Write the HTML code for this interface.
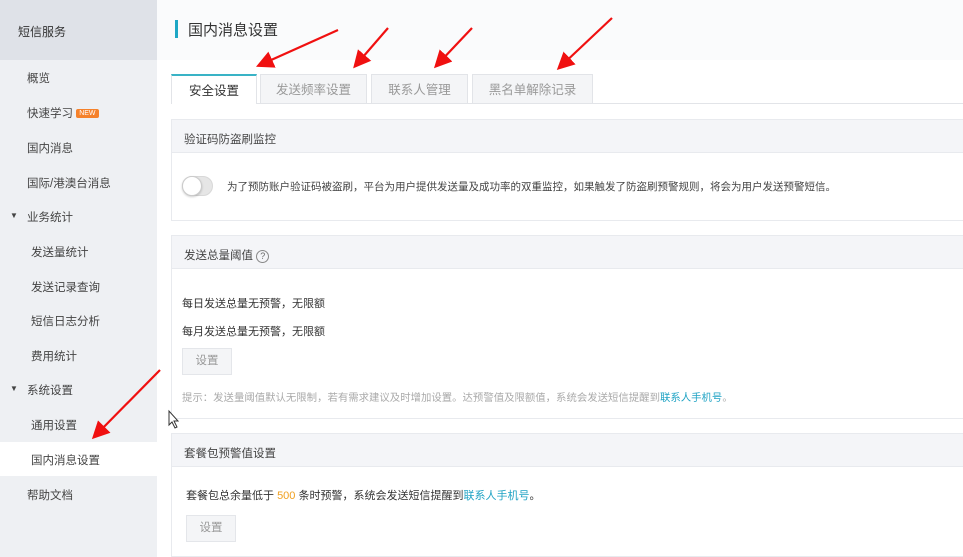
<!DOCTYPE html>
<html><head><meta charset="utf-8"><style>
*{margin:0;padding:0;box-sizing:border-box}
html,body{width:963px;height:557px;overflow:hidden}
body{background:#fff;font-family:"Liberation Sans","Noto Sans CJK SC",sans-serif;font-size:12px;color:#333;position:relative}
.side{position:absolute;left:0;top:0;width:157px;height:557px;background:#eef0f3}
.sh{height:60px;background:#dfe2e8;padding:23px 0 0 18px;font-size:12px;color:#333}
.si{position:absolute;left:27px;font-size:11.5px;color:#444}
.sub{left:31px}
.tri{position:absolute;left:10px;font-size:8px;color:#444}
.sel{position:absolute;left:0;top:442px;width:157px;height:34px;background:#fff}
.hdr{position:absolute;left:157px;top:0;width:806px;height:60px;background:#fafbfc}
.t{position:absolute;font-size:15px;color:#333}
.tab{position:absolute;top:74px;height:30px;border:1px solid #e2e4e8;background:#f4f5f7;color:#999;font-size:12.5px;text-align:center;line-height:30px}
.tab.a{background:#fff;color:#333;border-top:2px solid #39b3c6;border-bottom:none;height:30px}
.sec{position:absolute;left:171px;width:792px;border:1px solid #e8eaee;border-right:none;background:#fff;overflow:hidden}
.sec .h{height:33px;background:#f4f5f8;border-bottom:1px solid #e8eaee;padding:11px 0 0 12px;font-size:11.5px;color:#444}
.x{position:absolute;font-size:11px;color:#333;white-space:nowrap}
.btn{position:absolute;width:50px;height:27px;background:#f4f5f7;border:1px solid #e4e6ea;color:#999;text-align:center;line-height:25px;font-size:11.5px}
</style></head><body>
<div class="side">
<div class="sh">短信服务</div>
<div class="sel"></div>
<div class="si" style="top:70px">概览</div>
<div class="si" style="top:105px">快速学习 <span style="background:#f5812a;color:#fff;font-size:7px;padding:1px 3px;border-radius:2px;vertical-align:2px">NEW</span></div>
<div class="si" style="top:140px">国内消息</div>
<div class="si" style="top:175px">国际/港澳台消息</div>
<div class="tri" style="top:211px">▼</div><div class="si" style="top:209px">业务统计</div>
<div class="si sub" style="top:244px">发送量统计</div>
<div class="si sub" style="top:279px">发送记录查询</div>
<div class="si sub" style="top:313px">短信日志分析</div>
<div class="si sub" style="top:348px">费用统计</div>
<div class="tri" style="top:384px">▼</div><div class="si" style="top:382px">系统设置</div>
<div class="si sub" style="top:417px">通用设置</div>
<div class="si sub" style="top:452px">国内消息设置</div>
<div class="si" style="top:487px">帮助文档</div>
</div>
<div class="hdr"></div>
<div style="position:absolute;left:175px;top:20px;width:3px;height:18px;background:#1ea7c5"></div>
<div class="t" style="left:188px;top:19px">国内消息设置</div>
<div style="position:absolute;left:171px;top:103px;width:792px;height:1px;background:#e2e4e8"></div>
<div class="tab a" style="left:171px;width:86px">安全设置</div>
<div class="tab" style="left:260px;width:107px">发送频率设置</div>
<div class="tab" style="left:371px;width:97px">联系人管理</div>
<div class="tab" style="left:472px;width:121px">黑名单解除记录</div>

<div class="sec" style="top:119px;height:102px"><div class="h">验证码防盗刷监控</div></div>
<div style="position:absolute;left:182px;top:176px;width:31px;height:20px;border-radius:10px;background:#e6e6e6;border:1px solid #d8d8d8"></div>
<div style="position:absolute;left:182px;top:176px;width:20px;height:20px;border-radius:10px;background:#fff;border:1px solid #ccc;box-shadow:0 1px 2px rgba(0,0,0,.2)"></div>
<div class="x" style="left:227px;top:179px;color:#444;font-size:10.5px">为了预防账户验证码被盗刷，平台为用户提供发送量及成功率的双重监控，如果触发了防盗刷预警规则，将会为用户发送预警短信。</div>

<div class="sec" style="top:235px;height:184px"><div class="h">发送总量阈值 <span style="display:inline-block;width:13px;height:13px;border:1px solid #888;border-radius:50%;font-size:9px;text-align:center;line-height:11px;color:#666">?</span></div></div>
<div class="x" style="left:182px;top:295px">每日发送总量无预警，无限额</div>
<div class="x" style="left:182px;top:323px">每月发送总量无预警，无限额</div>
<div class="btn" style="left:182px;top:348px">设置</div>
<div class="x" style="left:182px;top:389px;color:#aaa;font-size:10.4px">提示：发送量阈值默认无限制，若有需求建议及时增加设置。达预警值及限额值，系统会发送短信提醒到<span style="color:#1fa3c4">联系人手机号</span>。</div>

<div class="sec" style="top:433px;height:124px"><div class="h">套餐包预警值设置</div></div>
<div class="x" style="left:186px;top:487px">套餐包总余量低于 <span style="color:#f0a020">500</span> 条时预警，系统会发送短信提醒到<span style="color:#1fa3c4">联系人手机号</span>。</div>
<div class="btn" style="left:186px;top:515px">设置</div>

<svg style="position:absolute;left:0;top:0" width="963" height="557">
<defs><marker id="m" markerWidth="8" markerHeight="8" refX="6" refY="4" orient="auto"><path d="M0,0 L8,4 L0,8 z" fill="#f01010"/></marker></defs>
<g stroke="#f01010" stroke-width="2.2" marker-end="url(#m)">
<line x1="338" y1="30" x2="260" y2="65"/>
<line x1="388" y1="28" x2="356" y2="65"/>
<line x1="472" y1="28" x2="437" y2="65"/>
<line x1="612" y1="18" x2="560" y2="67"/>
<line x1="160" y1="370" x2="95" y2="436"/>
</g>
<path d="M169,411 L169,425 L172,422 L175,428 L177,427 L174,421 L178,421 Z" fill="#fff" stroke="#333" stroke-width="1"/>
</svg>
</body></html>
